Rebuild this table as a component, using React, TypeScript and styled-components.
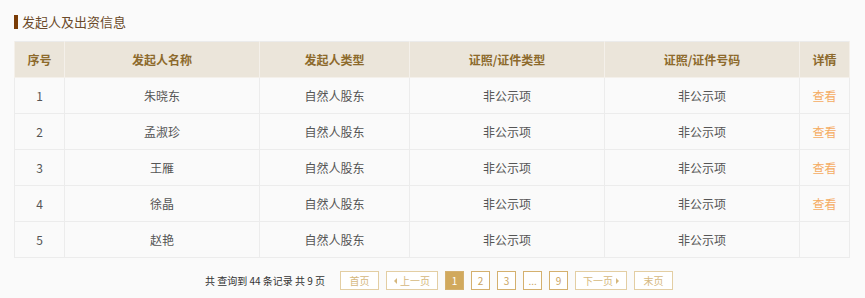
import styled, { createGlobalStyle } from "styled-components";

const GlobalStyle = createGlobalStyle`
  html, body {
    margin: 0;
    padding: 0;
    background: #fafafa;
  }
  body {
    font-family: "Noto Sans CJK SC", "Liberation Sans", sans-serif;
  }
`;

const investors = [
  { name: "朱晓东", type: "自然人股东", link: true },
  { name: "孟淑珍", type: "自然人股东", link: true },
  { name: "王雁", type: "自然人股东", link: true },
  { name: "徐晶", type: "自然人股东", link: true },
  { name: "赵艳", type: "自然人股东", link: false },
];

const columns = [
  { title: "序号", width: 50 },
  { title: "发起人名称", width: 195 },
  { title: "发起人类型", width: 150 },
  { title: "证照/证件类型", width: 195 },
  { title: "证照/证件号码", width: 195 },
  { title: "详情", width: 50 },
];

export default function App() {
  return (
    <>
      <GlobalStyle />
      <Section>
        <Title>发起人及出资信息</Title>
        <Table>
          <colgroup>
            {columns.map((c) => (
              <col key={c.title} style={{ width: c.width }} />
            ))}
          </colgroup>
          <thead>
            <tr>
              {columns.map((c) => (
                <Th key={c.title}>{c.title}</Th>
              ))}
            </tr>
          </thead>
          <tbody>
            {investors.map((item, idx) => (
              <tr key={idx}>
                <Td>{idx + 1}</Td>
                <Td>{item.name}</Td>
                <Td>{item.type}</Td>
                <Td>非公示项</Td>
                <Td>非公示项</Td>
                <Td>{item.link && <ViewLink>查看</ViewLink>}</Td>
              </tr>
            ))}
          </tbody>
        </Table>
        <Pager>
          <Summary>共 查询到 44 条记录 共 9 页</Summary>
          <PageButton $wide $muted>首页</PageButton>
          <PageButton $wide $muted>
            <Arrow $left />上一页
          </PageButton>
          <PageButton $active>1</PageButton>
          <PageButton>2</PageButton>
          <PageButton>3</PageButton>
          <PageButton>...</PageButton>
          <PageButton>9</PageButton>
          <PageButton $wide $muted>
            下一页<Arrow />
          </PageButton>
          <PageButton $wide $muted>末页</PageButton>
        </Pager>
      </Section>
    </>
  );
}

const Section = styled.div`
  width: 835px;
  padding: 14px 0 0 14px;
`;

const Title = styled.h3`
  margin: 0 0 11px;
  display: flex;
  align-items: center;
  height: 16px;
  font-size: 13px;
  font-weight: normal;
  color: #6b4a2a;
  line-height: 16px;

  &::before {
    content: "";
    width: 4px;
    height: 14px;
    background: #7a3c06;
    margin-right: 4px;
  }
`;

const Table = styled.table`
  width: 835px;
  border-collapse: collapse;
  table-layout: fixed;
  border: 1px solid #ebebeb;
`;

const Th = styled.th`
  height: 35px;
  padding: 0;
  background: #ebe5da;
  border: 1px solid #f4f0ea;
  border-top: 0;
  color: #8d6a2c;
  font-size: 12px;
  font-weight: bold;
  text-align: center;
`;

const Td = styled.td`
  height: 35px;
  padding: 0;
  background: #fafafa;
  border: 1px solid #ececec;
  color: #555;
  font-size: 12px;
  text-align: center;
`;

const ViewLink = styled.span`
  color: #f5ac62;
  cursor: pointer;
`;

const Pager = styled.div`
  display: flex;
  align-items: center;
  padding: 13px 0 0 191px;
  gap: 7px;
`;

const Summary = styled.span`
  font-size: 10px;
  color: #333;
  margin-right: 8px;
`;

const PageButton = styled.span<{ $active?: boolean; $wide?: boolean; $muted?: boolean }>`
  display: inline-flex;
  align-items: center;
  justify-content: center;
  box-sizing: border-box;
  height: 19px;
  min-width: ${(p) => (p.$wide ? "39px" : "19px")};
  padding: ${(p) => (p.$wide ? "0 7px" : "0 3px")};
  font-size: 10px;
  border: 1px solid ${(p) => (p.$muted ? "#e3cea3" : "#d4b06e")};
  background: ${(p) => (p.$active ? "#d1a95d" : "#fff")};
  color: ${(p) => (p.$active ? "#fff" : p.$muted ? "#d5b77c" : "#c9a360")};
  cursor: pointer;
`;

const Arrow = styled.span<{ $left?: boolean }>`
  width: 0;
  height: 0;
  border-top: 3px solid transparent;
  border-bottom: 3px solid transparent;
  ${(p) =>
    p.$left
      ? "border-right: 3px solid #d5b77c; margin-right: 3px;"
      : "border-left: 3px solid #d5b77c; margin-left: 3px;"}
`;
